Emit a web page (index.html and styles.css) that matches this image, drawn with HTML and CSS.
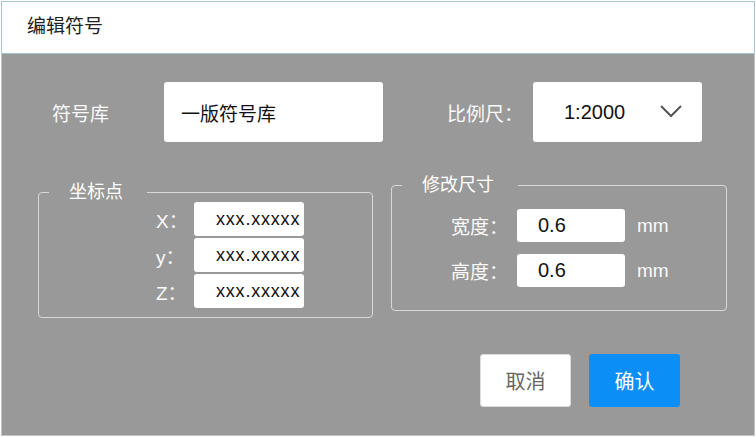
FILE: index.html
```html
<!DOCTYPE html>
<html lang="zh-CN">
<head>
  <meta charset="UTF-8" />
  <meta name="viewport" content="width=device-width, initial-scale=1.0"/>
  <title>编辑符号</title>
  <link rel="stylesheet" href="styles.css">
</head>
<body>

  <div class="dialog">
    <header class="dialog-title">编辑符号</header>

    <div class="dialog-body">
      <div class="top-row">
        <span class="label lib-label">符号库</span>
        <input class="field lib-field" type="text" value="一版符号库">
        <span class="label scale-label">比例尺：</span>
        <div class="select">
          <span>1:2000</span>
          <svg width="22" height="13" viewBox="0 0 22 13">
            <polyline points="1,1 11,11 21,1" fill="none" stroke="#555" stroke-width="2"/>
          </svg>
        </div>
      </div>

      <div class="groups">
        <fieldset class="group coords">
          <legend>坐标点</legend>
          <div class="coord-grid">
            <span class="label">X：</span>
            <input class="field small" type="text" value="xxx.xxxxx">
            <span class="label">y：</span>
            <input class="field small" type="text" value="xxx.xxxxx">
            <span class="label">Z：</span>
            <input class="field small" type="text" value="xxx.xxxxx">
          </div>
        </fieldset>

        <fieldset class="group size">
          <legend>修改尺寸</legend>
          <div class="size-grid">
            <span class="label">宽度：</span>
            <input class="field num" type="text" value="0.6">
            <span class="unit">mm</span>
            <span class="label">高度：</span>
            <input class="field num" type="text" value="0.6">
            <span class="unit">mm</span>
          </div>
        </fieldset>
      </div>

      <div class="actions">
        <button class="btn cancel">取消</button>
        <button class="btn ok">确认</button>
      </div>
    </div>
  </div>

</body>
</html>
```

FILE: styles.css
```css
* {
  box-sizing: border-box;
}
html, body {
  margin: 0;
  padding: 0;
  font-family: "Liberation Sans", "Noto Sans CJK SC", sans-serif;
  background-color: #fff;
}
body {
  padding: 1px 0 0 1px;
}
.dialog {
  width: 754px;
  height: 435px;
  display: flex;
  flex-direction: column;
}
.dialog-title {
  height: 53px;
  border: 1px solid #a3c6d6;
  background-color: #fff;
  color: #222;
  font-size: 19px;
  line-height: 50px;
  padding-left: 25px;
}
.dialog-body {
  flex: 1;
  background-color: #999;
  border: 1px solid #c4c4c4;
  border-top: none;
  padding-top: 28px;
}

.label {
  color: #fafafa;
  font-size: 19px;
}
.field {
  border: none;
  outline: none;
  background-color: #fff;
  border-radius: 3px;
  font-family: inherit;
  color: #111;
  margin: 0;
}

/* top row */
.top-row {
  display: flex;
  align-items: center;
  height: 60px;
  padding-left: 50px;
}
.lib-label {
  width: 112px;
}
.lib-field {
  width: 219px;
  height: 60px;
  font-size: 19px;
  padding-left: 17px;
}
.scale-label {
  margin-left: 64px;
  width: 86px;
}
.select {
  width: 169px;
  height: 60px;
  background-color: #fff;
  border-radius: 3px;
  display: flex;
  align-items: center;
  justify-content: space-between;
  padding: 0 20px 0 31px;
  font-size: 20px;
  color: #111;
}
.select svg {
  margin-top: -2px;
}

/* groups */
.groups {
  display: flex;
  align-items: flex-start;
  gap: 18px;
  margin-top: 33px;
  padding-left: 36px;
}
.group {
  margin: 0;
  border: 1.5px solid #d8d8d8;
  border-radius: 4px;
  padding: 0;
}
.group legend {
  color: #fff;
  font-size: 18px;
  line-height: 20px;
  margin-left: 10px;
  padding: 0 24px 0 20px;
}
.coords {
  width: 335px;
  margin-top: 7px;
  padding-bottom: 9px;
}
.coord-grid {
  display: grid;
  grid-template-columns: 38px 110px;
  row-gap: 2px;
  align-items: center;
  margin-left: 117px;
}
.field.small {
  width: 110px;
  height: 34px;
  font-size: 18px;
  letter-spacing: 0.8px;
  padding: 0 0 0 22px;
}
.size {
  width: 336px;
  padding-top: 14px;
  padding-bottom: 23px;
}
.size-grid {
  display: grid;
  grid-template-columns: 66px 108px auto;
  row-gap: 12px;
  align-items: center;
  margin-left: 59px;
}
.field.num {
  width: 108px;
  height: 33px;
  font-size: 20px;
  padding-left: 21px;
}
.unit {
  color: #fafafa;
  font-size: 19px;
  margin-left: 12px;
}

/* buttons */
.actions {
  display: flex;
  justify-content: flex-end;
  gap: 18px;
  margin-top: 36px;
  padding-right: 74px;
}
.btn {
  width: 91px;
  height: 53px;
  border-radius: 3px;
  font-family: inherit;
  font-size: 20px;
  cursor: pointer;
}
.cancel {
  background-color: #fff;
  border: 1px solid #ddd;
  color: #666;
}
.ok {
  background-color: #0b8ff6;
  border: none;
  color: #fff;
}
```
